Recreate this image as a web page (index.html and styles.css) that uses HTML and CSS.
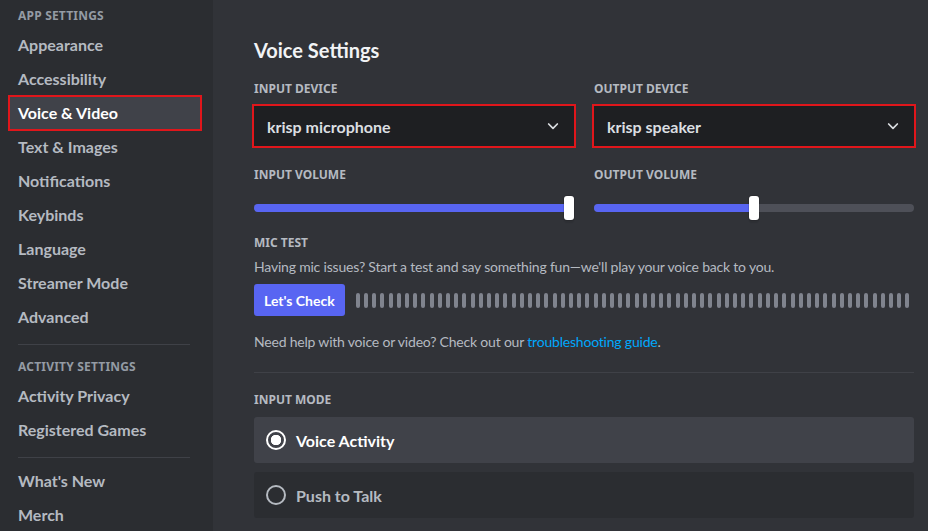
FILE: index.html
```html
<!DOCTYPE html>
<html>
<head>
<meta charset="UTF-8">
<title>Voice &amp; Video</title>
<meta name="viewport" content="width=device-width, initial-scale=1.0">
<link rel="stylesheet" href="styles.css">
</head>
<body>

<!-- SIDEBAR -->
<nav class="sidebar">
  <div class="head">App Settings</div>
  <div class="item">Appearance</div>
  <div class="item">Accessibility</div>
  <div class="item active">Voice &amp; Video</div>
  <div class="item">Text &amp; Images</div>
  <div class="item">Notifications</div>
  <div class="item">Keybinds</div>
  <div class="item">Language</div>
  <div class="item">Streamer Mode</div>
  <div class="item">Advanced</div>
  <div class="sep"></div>
  <div class="head">Activity Settings</div>
  <div class="item">Activity Privacy</div>
  <div class="item">Registered Games</div>
  <div class="sep sep2"></div>
  <div class="item">What's New</div>
  <div class="item">Merch</div>
</nav>

<!-- CONTENT -->
<main class="main">
  <h2>Voice Settings</h2>

  <div class="cols">
    <div>
      <div class="label">Input Device</div>
      <div class="select marked">
        <span>krisp microphone</span>
        <svg width="16" height="16" viewBox="0 0 24 24"><path d="M5.5 9l6.5 6.5 6.5-6.5" fill="none" stroke="#dbdee1" stroke-width="2.6" stroke-linecap="round" stroke-linejoin="round"/></svg>
      </div>
    </div>
    <div>
      <div class="label">Output Device</div>
      <div class="select marked">
        <span>krisp speaker</span>
        <svg width="16" height="16" viewBox="0 0 24 24"><path d="M5.5 9l6.5 6.5 6.5-6.5" fill="none" stroke="#dbdee1" stroke-width="2.6" stroke-linecap="round" stroke-linejoin="round"/></svg>
      </div>
    </div>

    <div>
      <div class="label vol">Input Volume</div>
      <div class="slider">
        <div class="fill" style="width:100%"></div>
        <div class="thumb" style="left:100%"></div>
      </div>
    </div>
    <div>
      <div class="label vol">Output Volume</div>
      <div class="slider">
        <div class="fill" style="width:50%"></div>
        <div class="thumb" style="left:50%"></div>
      </div>
    </div>
  </div>

  <div class="label mic">Mic Test</div>
  <p class="desc">Having mic issues? Start a test and say something fun—we'll play your voice back to you.</p>

  <div class="microw">
    <button class="check">Let's Check</button>
    <div class="bars">
      <i></i><i></i><i></i><i></i><i></i><i></i><i></i><i></i><i></i><i></i>
      <i></i><i></i><i></i><i></i><i></i><i></i><i></i><i></i><i></i><i></i>
      <i></i><i></i><i></i><i></i><i></i><i></i><i></i><i></i><i></i><i></i>
      <i></i><i></i><i></i><i></i><i></i><i></i><i></i><i></i><i></i><i></i>
      <i></i><i></i><i></i><i></i><i></i><i></i><i></i><i></i><i></i><i></i>
      <i></i><i></i><i></i><i></i><i></i><i></i><i></i><i></i><i></i><i></i>
      <i></i><i></i><i></i><i></i><i></i><i></i><i></i><i></i>
    </div>
  </div>

  <p class="desc help">Need help with voice or video? Check out our <a href="#">troubleshooting guide</a>.</p>

  <div class="divider"></div>

  <div class="label">Input Mode</div>
  <div class="option selected">
    <span class="radio"></span>Voice Activity
  </div>
  <div class="option">
    <span class="radio"></span>Push to Talk
  </div>
</main>

</body>
</html>
```

FILE: styles.css
```css
body{
  margin:0; height:531px; overflow:hidden;
  display:flex;
  font-family:Lato,"Noto Sans",sans-serif;
  background:#313338; color:#dbdee1;
}

/* sidebar */
.sidebar{
  width:213px; flex:none; box-sizing:border-box;
  background:#2b2d31; padding:8px 13px 0 10px;
}
.head{
  font-family:"Noto Sans",sans-serif;
  font-size:12px; line-height:16px; font-weight:700;
  text-transform:uppercase; color:#949ba4;
  padding-left:8px; margin-bottom:5px; letter-spacing:.2px;
}
.item{
  height:32px; line-height:32px; padding-left:8px;
  margin-bottom:2px; border-radius:4px;
  font-size:16px; font-weight:700; color:#b5bac1;
  white-space:nowrap;
}
.item.active{
  background:#404249; color:#fff;
  outline:2px solid #e0161b; border-radius:0;
}
.sep{height:1px; background:#3f4147; margin:11px 10px 14px 8px}
.sep2{margin:11px 10px 7px 8px}

/* main */
.main{flex:1; padding:38px 14px 0 41px}
h2{
  margin:0 0 19px; font-size:20px; line-height:24px;
  font-weight:700; color:#f2f3f5;
}
.label{
  font-family:"Noto Sans",sans-serif;
  font-size:12px; line-height:16px; font-weight:700;
  text-transform:uppercase; color:#b5bac1; margin-bottom:9px;
}
.cols{display:grid; grid-template-columns:1fr 1fr; column-gap:20px}

.select{
  height:40px; box-sizing:border-box; margin:2px 0;
  background:#1e1f22;
  display:flex; align-items:center; justify-content:space-between;
  padding:0 13px 0 13px; font-size:16px; font-weight:700; color:#dbdee1;
}
.marked{outline:2px solid #e0161b}
.vol{margin-top:19px; margin-bottom:13px}

.slider{position:relative; height:24px; margin-bottom:15px}
.slider::before{
  content:""; position:absolute; left:0; right:0; top:8px; height:8px;
  border-radius:4px; background:#4e5058;
}
.fill{
  position:absolute; left:0; top:8px; height:8px;
  border-radius:4px; background:#5865f2;
}
.thumb{
  position:absolute; top:0; width:10px; height:24px; margin-left:-10px;
  background:#fff; border-radius:3px;
  box-shadow:0 3px 1px rgba(0,0,0,.08),0 0 0 1px rgba(0,0,0,.1);
}
.slider .thumb[style*="50%"]{margin-left:-5px}

.mic{margin-bottom:7px}
.desc{margin:0; font-size:14px; line-height:18px; color:#b5bac1; letter-spacing:-.2px}
.microw{display:flex; align-items:center; gap:11px; margin-top:8px}
.check{
  height:32px; padding:0 10px; border:none; border-radius:3px;
  background:#5865f2; color:#fff;
  font-family:inherit; font-size:14px; font-weight:700;
}
.bars{flex:1; display:flex; justify-content:space-between; padding-right:4px}
.bars i{width:4px; height:15px; border-radius:2px; background:#80848e}

.help{margin-top:17px}
a{color:#00a8fc; text-decoration:none}
.divider{height:1px; background:#3f4147; margin:21px 0 19px}

.option{
  height:46px; display:flex; align-items:center;
  background:#2b2d31; border-radius:3px; margin-bottom:9px;
  padding-left:12px; font-size:16px; font-weight:700; color:#b5bac1;
}
.option.selected{background:#404249; color:#fff}
.radio{
  width:16px; height:16px; border-radius:50%;
  border:2px solid #b5bac1; margin-right:10px; flex:none;
}
.option.selected .radio{
  border-color:#fff;
  background:radial-gradient(circle,#fff 0 5px,transparent 5.5px);
}
```
